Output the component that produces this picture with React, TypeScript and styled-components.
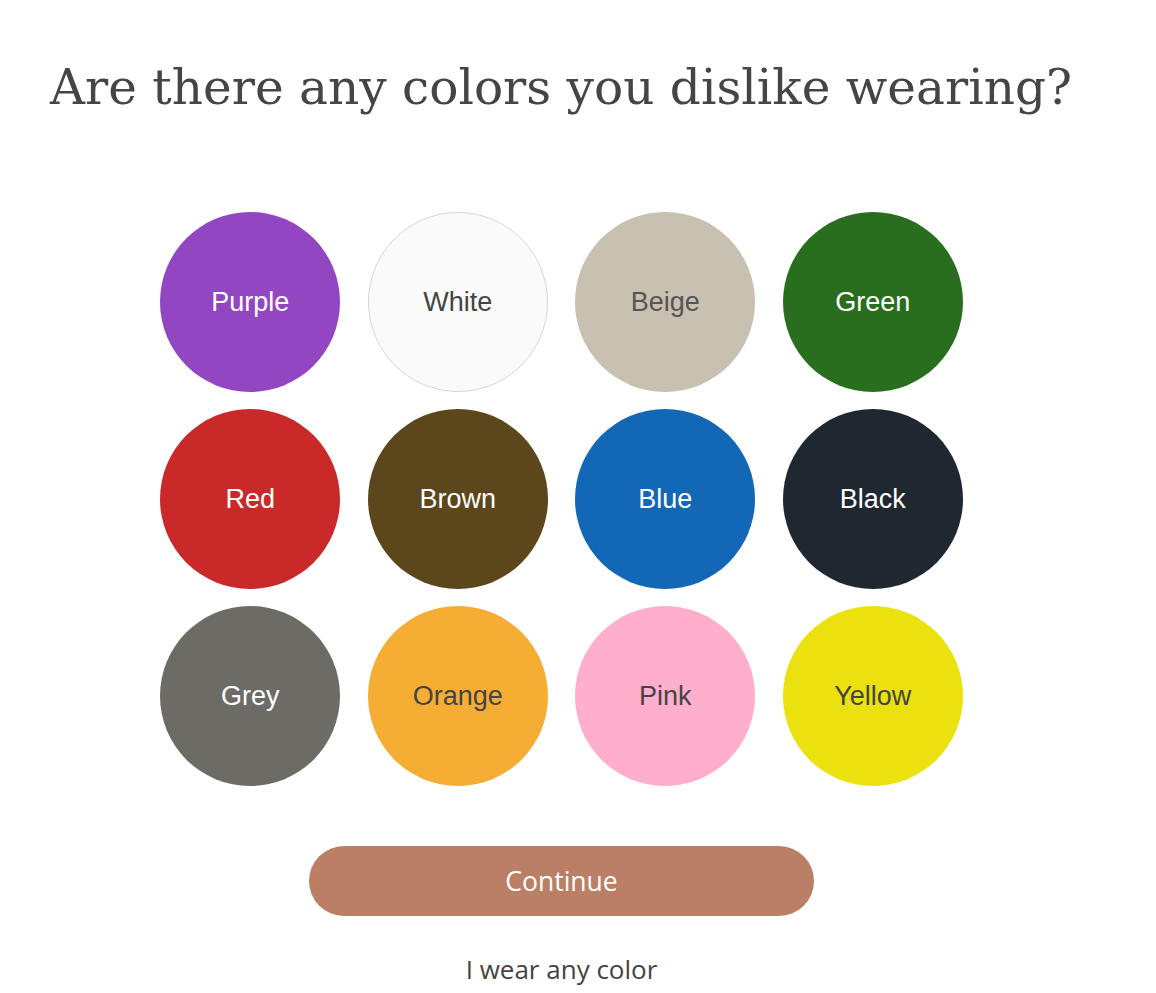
import React, { useState } from 'react';
import styled, { createGlobalStyle } from 'styled-components';

const GlobalStyle = createGlobalStyle`
  body {
    margin: 0;
    background: #fff;
    font-family: "Liberation Sans", Arial, sans-serif;
  }
`;

const Page = styled.div`
  width: 1156px;
  padding: 57px 0 0 50px;
  box-sizing: border-box;
`;

const Title = styled.h1`
  margin: 0;
  font-family: "DejaVu Serif", "Liberation Serif", serif;
  font-weight: 400;
  font-size: 48.5px;
  line-height: 61px;
  color: #454545;
  letter-spacing: 0;
`;

const Content = styled.div`
  width: 1023px;
  display: flex;
  flex-direction: column;
  align-items: center;
  padding-top: 94px;
`;

const Grid = styled.div`
  display: grid;
  grid-template-columns: repeat(4, 180px);
  column-gap: 27.5px;
  row-gap: 17px;
`;

const Swatch = styled.button<{ $bg: string; $fg: string; $outlined?: boolean }>`
  width: 180px;
  height: 180px;
  border-radius: 50%;
  border: ${p => (p.$outlined ? '1px solid #d6d6d6' : 'none')};
  background: ${p => p.$bg};
  color: ${p => p.$fg};
  font-family: "Liberation Sans", Arial, sans-serif;
  font-size: 27px;
  padding: 0;
  cursor: pointer;
  display: flex;
  align-items: center;
  justify-content: center;
`;

const ContinueButton = styled.button`
  margin-top: 60px;
  width: 505px;
  height: 70px;
  border: none;
  border-radius: 35px;
  background: #bb7f66;
  color: #fff;
  font-family: "Open Sans", "Liberation Sans", sans-serif;
  font-size: 26.5px;
  cursor: pointer;
`;

const AnyColor = styled.button`
  margin-top: 35px;
  background: none;
  border: none;
  padding: 0;
  color: #444;
  font-family: "Open Sans", "Liberation Sans", sans-serif;
  font-size: 26px;
  cursor: pointer;
`;

const colors = [
  { name: 'Purple', bg: '#9346c2', fg: '#fff' },
  { name: 'White', bg: '#fafafa', fg: '#444', outlined: true },
  { name: 'Beige', bg: '#c8c0b1', fg: '#555' },
  { name: 'Green', bg: '#296e1f', fg: '#fff' },
  { name: 'Red', bg: '#c92a29', fg: '#fff' },
  { name: 'Brown', bg: '#5c461c', fg: '#fff' },
  { name: 'Blue', bg: '#1367b7', fg: '#fff' },
  { name: 'Black', bg: '#1f2831', fg: '#fff' },
  { name: 'Grey', bg: '#6d6b66', fg: '#fff' },
  { name: 'Orange', bg: '#f5ae33', fg: '#444' },
  { name: 'Pink', bg: '#ffaecb', fg: '#444' },
  { name: 'Yellow', bg: '#ebe10f', fg: '#444' },
];

const App: React.FC = () => {
  const [disliked, setDisliked] = useState<string[]>([]);

  const toggle = (name: string) =>
    setDisliked(prev => (prev.includes(name) ? prev.filter(n => n !== name) : [...prev, name]));

  return (
    <Page>
      <GlobalStyle />
      <Title>Are there any colors you dislike wearing?</Title>
      <Content>
        <Grid>
          {colors.map(c => (
            <Swatch
              key={c.name}
              $bg={c.bg}
              $fg={c.fg}
              $outlined={c.outlined}
              aria-pressed={disliked.includes(c.name)}
              onClick={() => toggle(c.name)}
            >
              {c.name}
            </Swatch>
          ))}
        </Grid>
        <ContinueButton>Continue</ContinueButton>
        <AnyColor>I wear any color</AnyColor>
      </Content>
    </Page>
  );
};

export default App;
